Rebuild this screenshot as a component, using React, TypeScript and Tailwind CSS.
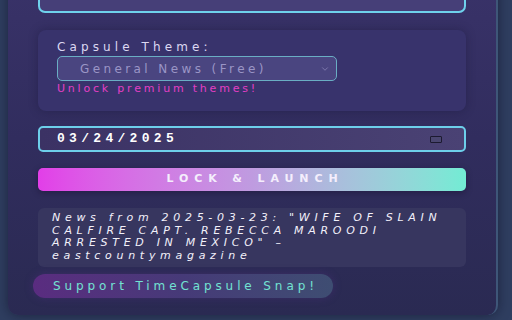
import { ChevronDown } from "lucide-react";

const wide = { fontFamily: '"DejaVu Sans", "Noto Sans", sans-serif' };

export default function App() {
  return (
    <div className="h-[320px] w-[512px] overflow-hidden bg-[#2f3e60]" style={wide}>
      <div className="-mt-[40px] ml-2 mr-[14px] rounded-b-[10px] border-r-2 border-[#3e5678] bg-gradient-to-b from-[#3a336a] via-[#312d5e] to-[#2a2a52] px-[30px] pb-[17px] pt-[8px] shadow-[0_0_12px_rgba(10,10,30,0.5)]">
        <div className="h-[45px] rounded-[7px] border-2 border-[#6fd2ec] bg-[#463f78]" />

        <div className="mt-[17px] rounded-[8px] bg-[#38336c] px-[19px] pb-[16px] pt-[11px] shadow-[0_0_10px_rgba(20,16,50,0.35)]">
          <div className="text-[12px] leading-[13px] tracking-[4.1px] text-[#dcd8f2]">Capsule Theme:</div>
          <div className="mt-[2px] flex h-[25px] w-[280px] items-center justify-between rounded-[5px] border border-[#6aaec4] bg-[#4a4580] pl-[22px] pr-[6px]">
            <span className="text-[12px] tracking-[3.4px] text-[#9a95c6]">General News (Free)</span>
            <ChevronDown size={10} strokeWidth={1.5} className="text-[#9a95c6]" />
          </div>
          <div className="mt-[2px] text-[11px] leading-[12px] tracking-[2.8px] text-[#e23fc4]">Unlock premium themes!</div>
        </div>

        <div className="mt-[15px] flex h-[26px] items-center justify-between rounded-[5px] border-2 border-[#6dcfea] bg-gradient-to-r from-[#3b3264] to-[#4a4274] pl-[17px] pr-[22px]">
          <span
            className="text-[13px] font-bold tracking-[4.3px] text-white"
            style={{ fontFamily: '"Liberation Mono", "DejaVu Sans Mono", monospace' }}
          >
            03/24/2025
          </span>
          <span className="h-[7px] w-[12px] rounded-[1px] border border-[#1c1a30] bg-[#4a4670]" />
        </div>

        <button
          type="button"
          className="mt-[16px] flex h-[23px] w-full items-center justify-center rounded-[5px] bg-gradient-to-r from-[#e23ee8] via-[#bf9be0] to-[#72ecd4] pl-[6px] text-[11px] font-bold tracking-[5.9px] text-[#f4eefc] shadow-[0_2px_6px_rgba(20,10,40,0.4)]"
        >
          LOCK &amp; LAUNCH
        </button>

        <div className="mt-[17px] whitespace-nowrap rounded-[6px] bg-[#37365f] pb-[5px] pl-[14px] pr-[4px] pt-[4px] text-[11px] italic leading-[12.5px] tracking-[4.7px] text-[#f2f0fa]">
          <div>News from 2025-03-23: "WIFE OF SLAIN</div>
          <div>CALFIRE CAPT. REBECCA MAROODI</div>
          <div>ARRESTED IN MEXICO" –</div>
          <div>eastcountymagazine</div>
        </div>

        <div className="-ml-[5px] mt-[7px] flex h-[24px] w-[300px] items-center rounded-full bg-gradient-to-r from-[#5a2c80] via-[#463a78] to-[#3e4d72] pl-[20px] shadow-[0_0_8px_rgba(90,50,140,0.35)]">
          <span className="text-[12px] tracking-[3.9px] text-[#72e2d2]">Support TimeCapsule Snap!</span>
        </div>
      </div>
    </div>
  );
}
